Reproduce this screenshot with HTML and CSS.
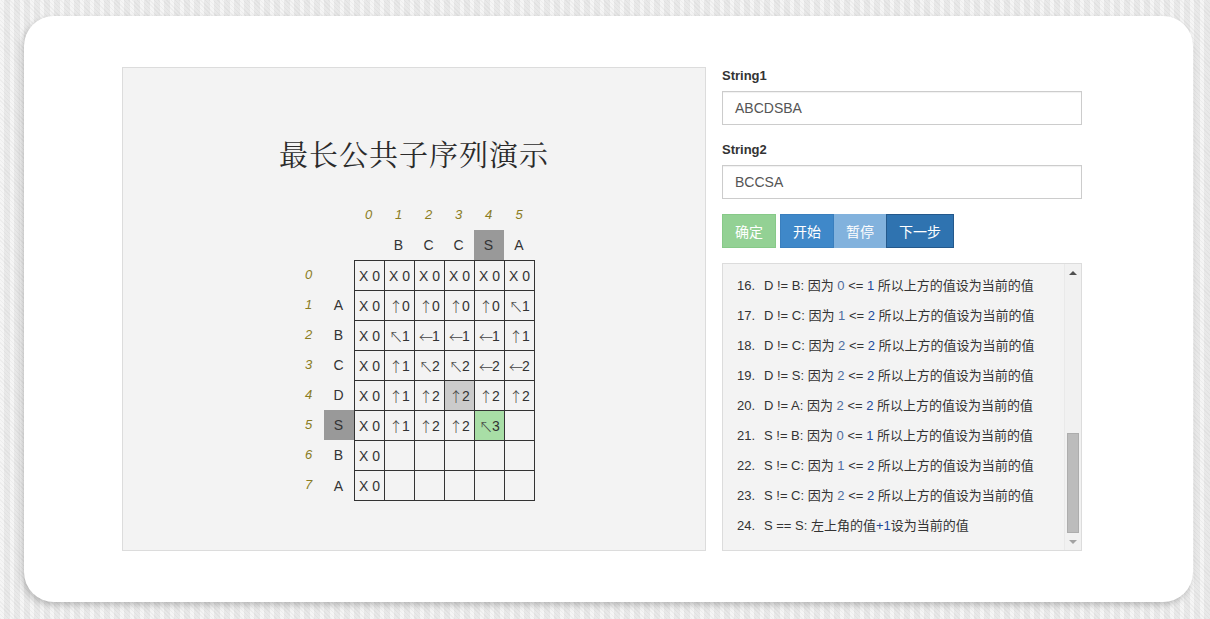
FILE: index.html
```html
<!DOCTYPE html>
<html lang="zh">
<head>
<meta charset="utf-8">
<title>最长公共子序列演示</title>
<link rel="stylesheet" href="styles.css">
</head>
<body>
<div class="card">
  <div class="stage">
    <h1 class="title">最长公共子序列演示</h1>
    <div class="grid">
      <div class="h"></div><div class="h"></div><div class="h idx">0</div><div class="h idx">1</div><div class="h idx">2</div><div class="h idx">3</div><div class="h idx">4</div><div class="h idx">5</div>
      <div class="h"></div><div class="h"></div><div class="h"></div><div class="h">B</div><div class="h">C</div><div class="h">C</div><div class="h sel">S</div><div class="h">A</div>

      <div class="h idx">0</div><div class="h"></div><div class="b">X 0</div><div class="b">X 0</div><div class="b">X 0</div><div class="b">X 0</div><div class="b">X 0</div><div class="b r">X 0</div>
      <div class="h idx">1</div><div class="h">A</div><div class="b">X 0</div><div class="b"><i>↑</i>0</div><div class="b"><i>↑</i>0</div><div class="b"><i>↑</i>0</div><div class="b"><i>↑</i>0</div><div class="b r"><i>↖</i>1</div>
      <div class="h idx">2</div><div class="h">B</div><div class="b">X 0</div><div class="b"><i>↖</i>1</div><div class="b"><i>←</i>1</div><div class="b"><i>←</i>1</div><div class="b"><i>←</i>1</div><div class="b r"><i>↑</i>1</div>
      <div class="h idx">3</div><div class="h">C</div><div class="b">X 0</div><div class="b"><i>↑</i>1</div><div class="b"><i>↖</i>2</div><div class="b"><i>↖</i>2</div><div class="b"><i>←</i>2</div><div class="b r"><i>←</i>2</div>
      <div class="h idx">4</div><div class="h">D</div><div class="b">X 0</div><div class="b"><i>↑</i>1</div><div class="b"><i>↑</i>2</div><div class="b cur"><i>↑</i>2</div><div class="b"><i>↑</i>2</div><div class="b r"><i>↑</i>2</div>
      <div class="h idx">5</div><div class="h sel">S</div><div class="b">X 0</div><div class="b"><i>↑</i>1</div><div class="b"><i>↑</i>2</div><div class="b"><i>↑</i>2</div><div class="b hit"><i>↖</i>3</div><div class="b r"></div>
      <div class="h idx">6</div><div class="h">B</div><div class="b">X 0</div><div class="b"></div><div class="b"></div><div class="b"></div><div class="b"></div><div class="b r"></div>
      <div class="h idx">7</div><div class="h">A</div><div class="b btm">X 0</div><div class="b btm"></div><div class="b btm"></div><div class="b btm"></div><div class="b btm"></div><div class="b btm r"></div>
    </div>
  </div>

  <div class="side">
    <div class="group">
      <label class="lbl">String1</label>
      <div class="input">ABCDSBA</div>
    </div>
    <div class="group">
      <label class="lbl">String2</label>
      <div class="input">BCCSA</div>
    </div>
    <div class="actions">
      <button class="btn ok">确定</button>
      <div class="btn-group">
        <button class="btn start">开始</button><button class="btn pause">暂停</button><button class="btn next">下一步</button>
      </div>
    </div>
    <div class="log">
      <ol class="steps">
        <li><span class="n">16.</span><span>D != B: 因为 <b class="v1">0</b> &lt;= <b class="v2">1</b> 所以上方的值设为当前的值</span></li>
        <li><span class="n">17.</span><span>D != C: 因为 <b class="v1">1</b> &lt;= <b class="v2">2</b> 所以上方的值设为当前的值</span></li>
        <li><span class="n">18.</span><span>D != C: 因为 <b class="v1">2</b> &lt;= <b class="v2">2</b> 所以上方的值设为当前的值</span></li>
        <li><span class="n">19.</span><span>D != S: 因为 <b class="v1">2</b> &lt;= <b class="v2">2</b> 所以上方的值设为当前的值</span></li>
        <li><span class="n">20.</span><span>D != A: 因为 <b class="v1">2</b> &lt;= <b class="v2">2</b> 所以上方的值设为当前的值</span></li>
        <li><span class="n">21.</span><span>S != B: 因为 <b class="v1">0</b> &lt;= <b class="v2">1</b> 所以上方的值设为当前的值</span></li>
        <li><span class="n">22.</span><span>S != C: 因为 <b class="v1">1</b> &lt;= <b class="v2">2</b> 所以上方的值设为当前的值</span></li>
        <li><span class="n">23.</span><span>S != C: 因为 <b class="v1">2</b> &lt;= <b class="v2">2</b> 所以上方的值设为当前的值</span></li>
        <li><span class="n">24.</span><span>S == S: 左上角的值<b class="v2">+1</b>设为当前的值</span></li>
      </ol>
      <div class="sbar">
        <div class="arrow up"></div>
        <div class="track"><div class="thumb"></div></div>
        <div class="arrow down"></div>
      </div>
    </div>
  </div>
</div>
</body>
</html>
```

FILE: styles.css
```css
* { box-sizing: border-box; }

html, body { height: 100%; }

body {
  margin: 0;
  padding: 16px 17px 17px 24px;
  font-family: "Liberation Sans", "Noto Sans CJK SC", Arial, sans-serif;
  color: #333;
  background-color: #e9e9e9;
  background-image:
    repeating-linear-gradient(45deg, rgba(0,0,0,0.035) 0 1px, transparent 1px 3px),
    repeating-linear-gradient(90deg, rgba(255,255,255,0.55) 0 4px, transparent 4px 10px);
}

.card {
  height: 586px;
  background: #fff;
  border-radius: 30px;
  box-shadow: -2px 3px 6px rgba(0,0,0,0.22);
  display: flex;
  gap: 16px;
  padding: 51px 0 0 98px;
}

/* left stage */
.stage {
  width: 584px;
  height: 484px;
  background: #f3f3f3;
  border: 1px solid #dcdcdc;
  padding-top: 60px;
  display: flex;
  flex-direction: column;
  align-items: center;
}

.title {
  margin: 0;
  height: 52px;
  line-height: 52px;
  font-family: "Noto Serif CJK SC", "Noto Sans CJK SC", serif;
  font-weight: normal;
  font-size: 29px;
  letter-spacing: 1px;
  color: #2b2b2b;
}

.grid {
  margin-top: 20px;
  display: grid;
  grid-template-columns: 30px 30px repeat(5, 30px) 31px;
  grid-template-rows: repeat(9, 30px) 31px;
  font-size: 14px;
  color: #333;
}

.grid > div {
  display: flex;
  align-items: center;
  justify-content: center;
  white-space: nowrap;
}

.grid .idx {
  font-style: italic;
  color: #8a7c22;
  font-size: 13px;
  padding-bottom: 2px;
}

.grid .sel { background: #999; }

.grid .b {
  border-left: 1px solid #333;
  border-top: 1px solid #333;
  padding-left: 1px;
}
.grid .b.r { border-right: 1px solid #333; }
.grid .b.btm { border-bottom: 1px solid #333; }

.grid .b i {
  font-style: normal;
  font-family: "Noto Sans CJK SC", sans-serif;
  font-weight: 300;
  font-size: 14px;
  line-height: 1;
  margin-right: -1px;
  color: #444;
}

.grid .cur { background: #cbcbcb; }
.grid .hit { background: #a8dea6; }

/* right side */
.side {
  width: 360px;
  display: flex;
  flex-direction: column;
}

.group { margin-bottom: 16px; }

.lbl {
  display: block;
  font-weight: bold;
  font-size: 13px;
  line-height: 18px;
  margin-bottom: 6px;
  color: #333;
}

.input {
  height: 34px;
  border: 1px solid #ccc;
  background: #fff;
  padding: 0 12px;
  line-height: 32px;
  font-size: 14px;
  color: #555;
  box-shadow: inset 0 1px 1px rgba(0,0,0,0.06);
}

.actions {
  display: flex;
  gap: 4px;
  margin-top: -1px;
}

.btn-group { display: flex; }

.btn {
  flex: none;
  height: 34px;
  padding: 0;
  border: 1px solid transparent;
  font-family: "Noto Sans CJK SC", "Liberation Sans", sans-serif;
  font-size: 14px;
  line-height: 32px;
  white-space: nowrap;
  text-align: center;
  color: #fff;
  cursor: pointer;
}

.btn.ok { background: #93d194; border-color: #87c988; width: 54px; }
.btn.start { background: #3f88c9; border-color: #3a7fbe; width: 54px; }
.btn.pause { background: #82b2dd; border-color: #82b2dd; width: 52px; }
.btn.next { background: #2f73b0; border-color: #24598c; width: 68px; }

.log {
  margin-top: 15px;
  height: 288px;
  background: #f3f3f3;
  border: 1px solid #dcdcdc;
  display: flex;
}

.steps {
  flex: 1;
  list-style: none;
  margin: 0;
  padding: 7px 0 0 14px;
  font-size: 13px;
  color: #333;
  overflow: hidden;
}

.steps li {
  display: flex;
  line-height: 30px;
  height: 30px;
  white-space: nowrap;
}

.steps .n { width: 27px; flex: none; }

.steps b { font-weight: normal; }
.steps .v1 { color: #4f6d9e; }
.steps .v2 { color: #22489a; }

.sbar {
  width: 17px;
  flex: none;
  background: #f1f1f1;
  border-left: 1px solid #e9e9e9;
  display: flex;
  flex-direction: column;
}

.arrow {
  height: 17px;
  display: flex;
  align-items: center;
  justify-content: center;
}

.arrow::before {
  content: "";
  width: 0;
  height: 0;
  border-left: 4px solid transparent;
  border-right: 4px solid transparent;
}

.arrow.up::before { border-bottom: 4px solid #505050; }
.arrow.down::before { border-top: 4px solid #a3a3a3; }

.track {
  flex: 1;
  display: flex;
  flex-direction: column;
  justify-content: flex-end;
  padding: 0 2px 0 2px;
}

.thumb {
  height: 100px;
  background: #bcbcbc;
  border: 1px solid #adadad;
}
```
